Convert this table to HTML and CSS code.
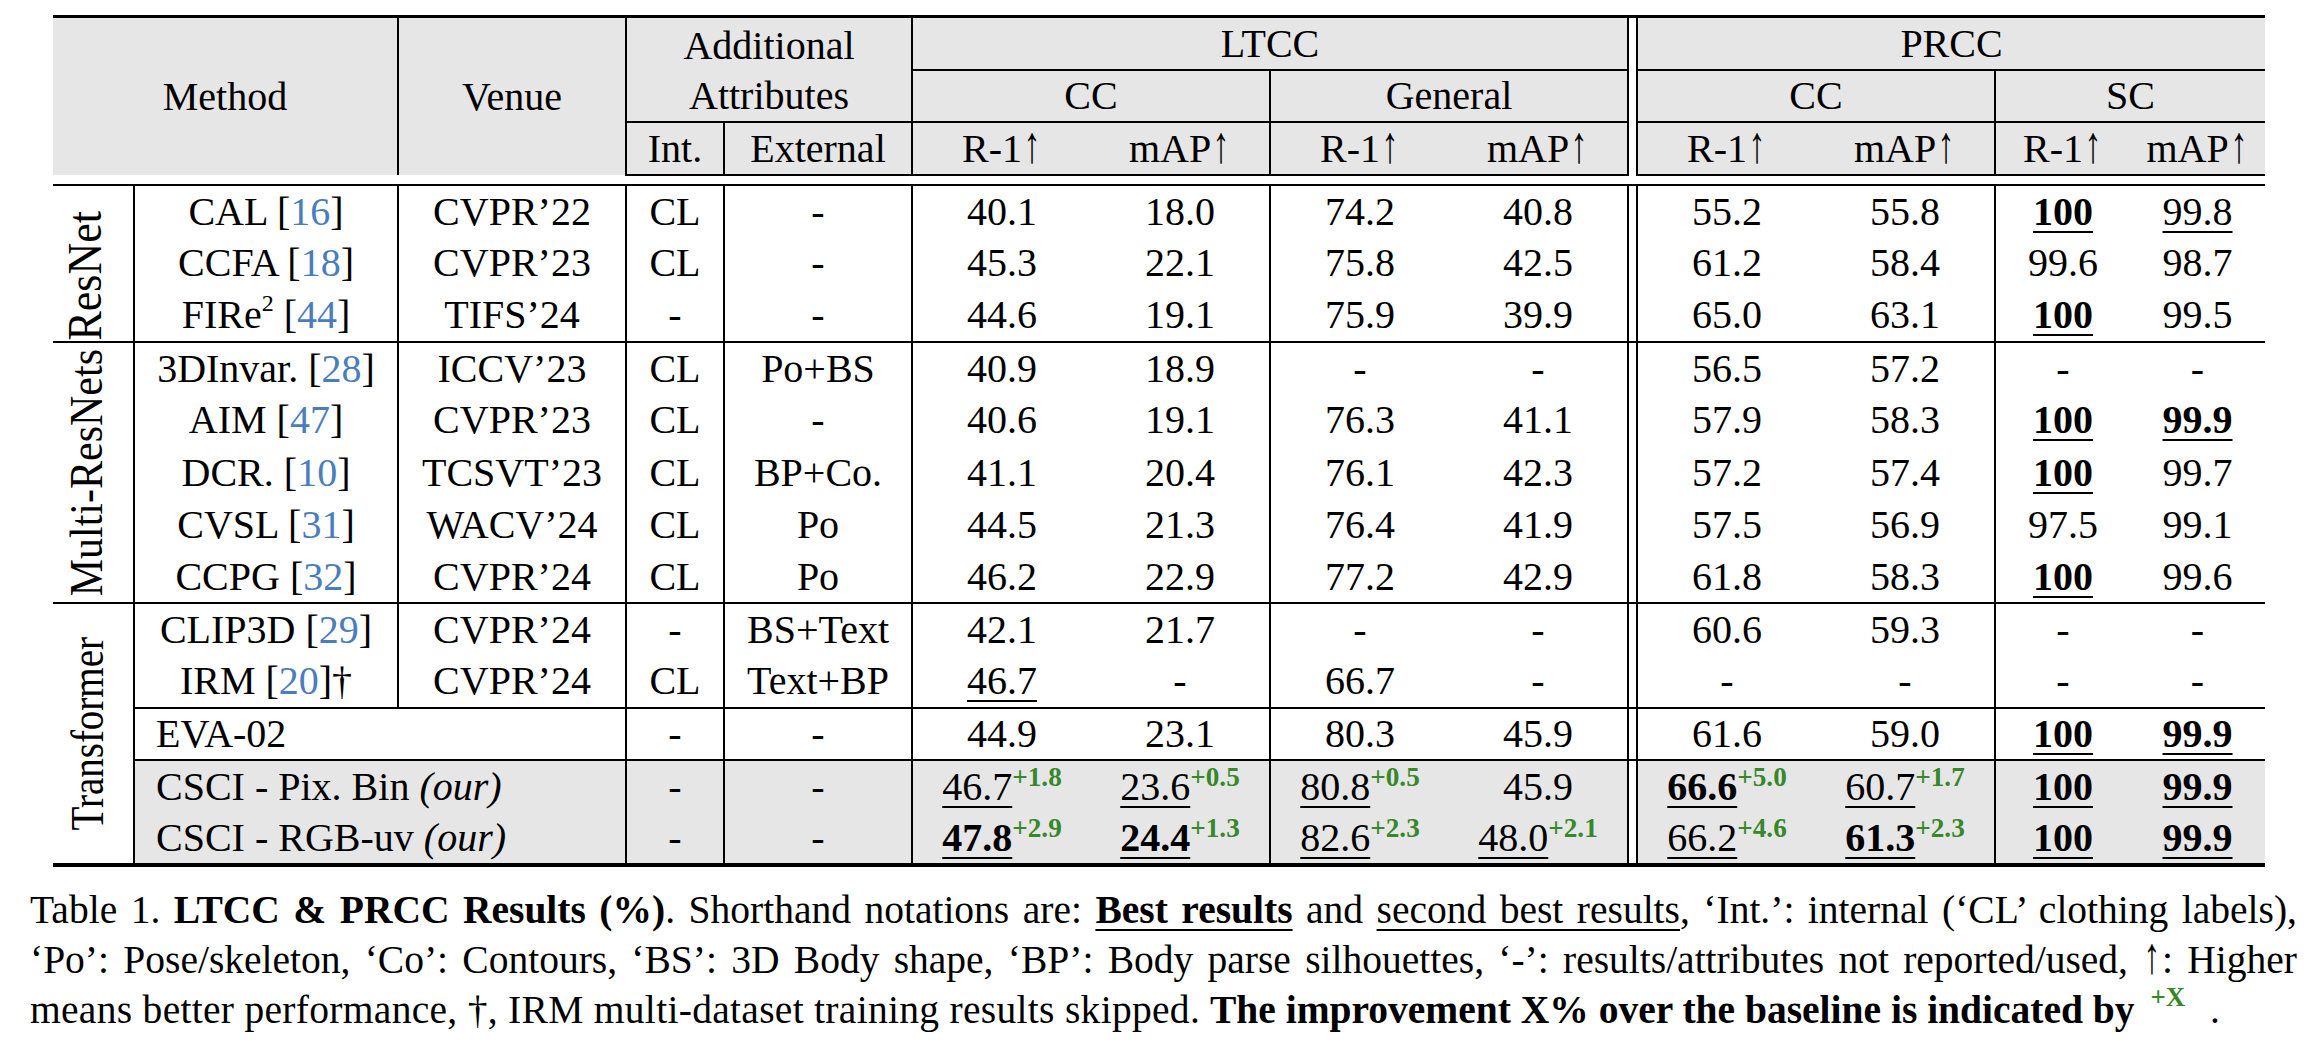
FILE: index.html
```html
<!DOCTYPE html>
<html lang="en">
<head>
<meta charset="utf-8">
<title>Table 1. LTCC &amp; PRCC Results</title>
<link rel="stylesheet" href="styles.css">
</head>
<body>
<figure class="figure">
  <table class="results">
    <colgroup>
      <col class="c-grp br">
      <col class="c-method br">
      <col class="c-venue br">
      <col class="c-int br">
      <col class="c-ext br">
      <col class="c-num">
      <col class="c-num br">
      <col class="c-num">
      <col class="c-num">
      <col class="c-sep">
      <col class="c-num">
      <col class="c-num br">
      <col class="c-sc">
      <col class="c-sc">
    </colgroup>
    <thead>
      <tr class="h1">
        <th colspan="2" rowspan="3">Method</th>
        <th rowspan="3">Venue</th>
        <th colspan="2" rowspan="2" class="bb two">Additional<br>Attributes</th>
        <th colspan="4" class="bb">LTCC</th>
        <th rowspan="3" class="sep"></th>
        <th colspan="4" class="bb">PRCC</th>
      </tr>
      <tr class="h2">
        <th colspan="2" class="bb">CC</th>
        <th colspan="2" class="bb">General</th>
        <th colspan="2" class="bb">CC</th>
        <th colspan="2" class="bb">SC</th>
      </tr>
      <tr class="h3">
        <th>Int.</th><th>External</th>
        <th>R-1<span class="arr">↑</span></th><th>mAP<span class="arr">↑</span></th>
        <th>R-1<span class="arr">↑</span></th><th>mAP<span class="arr">↑</span></th>
        <th>R-1<span class="arr">↑</span></th><th>mAP<span class="arr">↑</span></th>
        <th>R-1<span class="arr">↑</span></th><th>mAP<span class="arr">↑</span></th>
      </tr>
    </thead>
    <tbody class="spacer">
      <tr><td colspan="14"></td></tr>
    </tbody>
    <tbody>
      <tr>
        <th rowspan="3" class="grp-label g-resnet"><span>ResNet</span></th>
        <td>CAL [<span class="cite">16</span>]</td><td>CVPR’22</td><td>CL</td><td>-</td>
        <td>40.1</td><td>18.0</td><td>74.2</td><td>40.8</td><td class="sep"></td>
        <td>55.2</td><td>55.8</td><td><b><u>100</u></b></td><td><u>99.8</u></td>
      </tr>
      <tr>
        <td>CCFA [<span class="cite">18</span>]</td><td>CVPR’23</td><td>CL</td><td>-</td>
        <td>45.3</td><td>22.1</td><td>75.8</td><td>42.5</td><td class="sep"></td>
        <td>61.2</td><td>58.4</td><td>99.6</td><td>98.7</td>
      </tr>
      <tr>
        <td>FIRe<sup class="pw">2</sup> [<span class="cite">44</span>]</td><td>TIFS’24</td><td>-</td><td>-</td>
        <td>44.6</td><td>19.1</td><td>75.9</td><td>39.9</td><td class="sep"></td>
        <td>65.0</td><td>63.1</td><td><b><u>100</u></b></td><td>99.5</td>
      </tr>
      <tr class="grp">
        <th rowspan="5" class="grp-label g-multi"><span>Multi-ResNets</span></th>
        <td>3DInvar. [<span class="cite">28</span>]</td><td>ICCV’23</td><td>CL</td><td>Po+BS</td>
        <td>40.9</td><td>18.9</td><td>-</td><td>-</td><td class="sep"></td>
        <td>56.5</td><td>57.2</td><td>-</td><td>-</td>
      </tr>
      <tr>
        <td>AIM [<span class="cite">47</span>]</td><td>CVPR’23</td><td>CL</td><td>-</td>
        <td>40.6</td><td>19.1</td><td>76.3</td><td>41.1</td><td class="sep"></td>
        <td>57.9</td><td>58.3</td><td><b><u>100</u></b></td><td><b><u>99.9</u></b></td>
      </tr>
      <tr>
        <td>DCR. [<span class="cite">10</span>]</td><td>TCSVT’23</td><td>CL</td><td>BP+Co.</td>
        <td>41.1</td><td>20.4</td><td>76.1</td><td>42.3</td><td class="sep"></td>
        <td>57.2</td><td>57.4</td><td><b><u>100</u></b></td><td>99.7</td>
      </tr>
      <tr>
        <td>CVSL [<span class="cite">31</span>]</td><td>WACV’24</td><td>CL</td><td>Po</td>
        <td>44.5</td><td>21.3</td><td>76.4</td><td>41.9</td><td class="sep"></td>
        <td>57.5</td><td>56.9</td><td>97.5</td><td>99.1</td>
      </tr>
      <tr>
        <td>CCPG [<span class="cite">32</span>]</td><td>CVPR’24</td><td>CL</td><td>Po</td>
        <td>46.2</td><td>22.9</td><td>77.2</td><td>42.9</td><td class="sep"></td>
        <td>61.8</td><td>58.3</td><td><b><u>100</u></b></td><td>99.6</td>
      </tr>
      <tr class="grp">
        <th rowspan="5" class="grp-label g-trans"><span>Transformer</span></th>
        <td>CLIP3D [<span class="cite">29</span>]</td><td>CVPR’24</td><td>-</td><td>BS+Text</td>
        <td>42.1</td><td>21.7</td><td>-</td><td>-</td><td class="sep"></td>
        <td>60.6</td><td>59.3</td><td>-</td><td>-</td>
      </tr>
      <tr>
        <td>IRM [<span class="cite">20</span>]†</td><td>CVPR’24</td><td>CL</td><td>Text+BP</td>
        <td><u>46.7</u></td><td>-</td><td>66.7</td><td>-</td><td class="sep"></td>
        <td>-</td><td>-</td><td>-</td><td>-</td>
      </tr>
      <tr class="sub">
        <td colspan="2" class="name">EVA-02</td><td>-</td><td>-</td>
        <td>44.9</td><td>23.1</td><td>80.3</td><td>45.9</td><td class="sep"></td>
        <td>61.6</td><td>59.0</td><td><b><u>100</u></b></td><td><b><u>99.9</u></b></td>
      </tr>
      <tr class="sub ours">
        <td colspan="2" class="name">CSCI - Pix. Bin <i>(our)</i></td><td>-</td><td>-</td>
        <td><u>46.7</u><sup class="imp">+1.8</sup></td>
        <td><u>23.6</u><sup class="imp">+0.5</sup></td>
        <td><u>80.8</u><sup class="imp">+0.5</sup></td>
        <td>45.9</td><td class="sep"></td>
        <td><b><u>66.6</u></b><sup class="imp">+5.0</sup></td>
        <td><u>60.7</u><sup class="imp">+1.7</sup></td>
        <td><b><u>100</u></b></td><td><b><u>99.9</u></b></td>
      </tr>
      <tr class="ours">
        <td colspan="2" class="name">CSCI - RGB-uv <i>(our)</i></td><td>-</td><td>-</td>
        <td><b><u>47.8</u></b><sup class="imp">+2.9</sup></td>
        <td><b><u>24.4</u></b><sup class="imp">+1.3</sup></td>
        <td><u>82.6</u><sup class="imp">+2.3</sup></td>
        <td><u>48.0</u><sup class="imp">+2.1</sup></td><td class="sep"></td>
        <td><u>66.2</u><sup class="imp">+4.6</sup></td>
        <td><b><u>61.3</u></b><sup class="imp">+2.3</sup></td>
        <td><b><u>100</u></b></td><td><b><u>99.9</u></b></td>
      </tr>
    </tbody>
  </table>
  <figcaption class="caption">
    <span class="ln j">Table 1. <b>LTCC &amp; PRCC Results (%)</b>. Shorthand notations are: <b><u>Best results</u></b> and <u>second best results</u>, ‘Int.’: internal (‘CL’ clothing labels),</span>
    <span class="ln j">‘Po’: Pose/skeleton, ‘Co’: Contours, ‘BS’: 3D Body shape, ‘BP’: Body parse silhouettes, ‘-’: results/attributes not reported/used, <span class="arr">↑</span>: Higher</span>
    <span class="ln last"><span class="reg">means better performance, †, IRM multi-dataset training results skipped.</span> <b>The improvement X% over the baseline is indicated by</b> <sup class="imp cap-imp">+X</sup> .</span>
  </figcaption>
</figure>
</body>
</html>
```

FILE: styles.css
```css
html, body {
  margin: 0;
  padding: 0;
  background: #ffffff;
}

body {
  font-family: "Liberation Serif", "Times New Roman", serif;
  color: #000;
}

.figure {
  margin: 0;
  padding: 15px 0 0 0;
  width: 2312px;
}

.results {
  margin-left: 53px;
  width: 2211px;
  border-collapse: collapse;
  table-layout: fixed;
  font-size: 40px;
  border-top: 3px solid #000;
  border-bottom: 4px solid #000;
}

.c-grp { width: 81px; }
.c-method { width: 264px; }
.c-venue { width: 228px; }
.c-int { width: 98px; }
.c-ext { width: 188px; }
.c-num { width: 179px; }
.c-sep { width: 9px; border-left: 2px solid #000; border-right: 2px solid #000; }
.c-sc { width: 135px; }
col.br { border-right: 2px solid #000; }

.results th,
.results td {
  padding: 0;
  text-align: center;
  vertical-align: middle;
  font-weight: normal;
  white-space: nowrap;
  line-height: 1.15;
}

.results thead th {
  background: #e6e6e6;
}

.results thead th.sep,
.results td.sep {
  background: #ffffff;
}

.results .bb {
  border-bottom: 2px solid #000;
}

.results .two {
  line-height: 50px;
  vertical-align: top;
  padding-top: 3px;
}

.h1 { height: 53px; }
.h2 { height: 51px; }
.h3 { height: 53px; }

.h3 th {
  border-bottom: 2px solid #000;
}

.spacer td {
  height: 8px;
  padding: 0;
  border-bottom: 2px solid #000;
  background: #fff;
}

.results tbody tr {
  height: 52.3px;
}

.results tbody.spacer tr {
  height: 10px;
}

.results tr.grp > * {
  border-top: 2px solid #000;
}

.results tr.sub > td {
  border-top: 2px solid #000;
}

.results tr.ours > td {
  background: #e6e6e6;
}

.results tr.ours > td.sep {
  background: #ffffff;
}

.results td.name {
  text-align: left;
  padding-left: 21px;
}

.results th.grp-label {
  background: #fff;
  line-height: 0;
  padding-right: 14px;
}

.grp-label span {
  display: inline-block;
  vertical-align: middle;
  writing-mode: vertical-rl;
  transform: rotate(180deg) scaleX(1.08);
  font-size: 44px;
  line-height: 1;
}

.g-resnet span {
  translate: 0 12px;
}

.g-multi span {
  font-size: 42px;
  transform: rotate(180deg) scaleX(1.12);
}

.g-trans span {
  font-size: 39px;
  transform: rotate(180deg) scaleX(1.2);
}

.arr {
  display: inline-block;
  transform: scale(0.85, 1.3);
  transform-origin: 50% 85%;
  line-height: 1;
}

.cite {
  color: #4a7dbd;
}

.pw {
  font-size: 0.6em;
  vertical-align: 0.7em;
  line-height: 0;
}

u {
  text-decoration: underline;
  text-decoration-thickness: 2px;
  text-underline-offset: 6px;
}

b {
  font-weight: bold;
}

.imp {
  color: #36882a;
  font-weight: bold;
  font-size: 0.68em;
  vertical-align: 14px;
  line-height: 0;
}

.caption {
  margin: 18px 0 0 30px;
  width: 2267px;
  font-size: 39.5px;
  line-height: 50px;
}

.caption .ln {
  display: block;
  white-space: normal;
}

.caption .j {
  text-align: justify;
  text-align-last: justify;
}

.caption .last {
  white-space: nowrap;
}

.caption .last .reg {
  letter-spacing: 0.3px;
}

.caption .cap-imp {
  font-size: 0.68em;
  vertical-align: 17px;
  margin: 0 15px 0 6px;
}
```
